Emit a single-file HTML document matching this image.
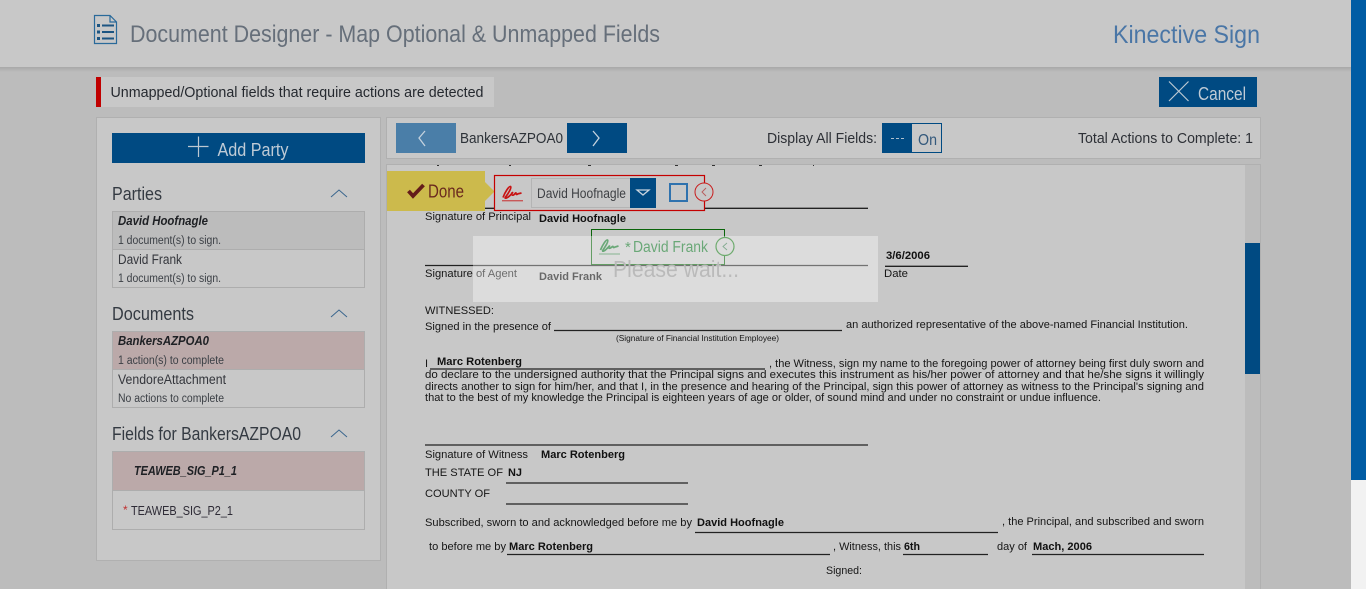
<!DOCTYPE html>
<html><head><meta charset="utf-8"><style>
html,body{margin:0;padding:0;width:1366px;height:589px;overflow:hidden;background:#bcbcbc}
svg{display:block;position:absolute;left:0;top:0}
text{font-family:"Liberation Sans",sans-serif;white-space:pre}
.d{font-size:11px;fill:#161616}
.b{font-size:11px;fill:#111;font-weight:bold}
</style></head><body>
<svg width="1366" height="589" viewBox="0 0 1366 589" xmlns="http://www.w3.org/2000/svg">
<defs>
<linearGradient id="sh" x1="0" y1="0" x2="0" y2="1"><stop offset="0" stop-color="#a8a8a8"/><stop offset="1" stop-color="#bcbcbc"/></linearGradient>
</defs>
<rect width="1366" height="589" fill="#bcbcbc"/>
<rect x="0" y="67" width="1351" height="5" fill="url(#sh)"/>
<rect width="1351" height="67" fill="#c8c8c8"/>
<rect x="1351" width="15" height="480" fill="#005ca4"/>
<rect x="1351" y="480" width="15" height="109" fill="#f2f2f2"/>

<!-- header -->
<path d="M94.5 15.5H110L116.5 22V43.500H94.500Z M110 15.5V22H116.5" fill="none" stroke="#2a6a9a" stroke-width="1.200"/>
<rect x="97" y="24" width="3" height="3" fill="#1c5582"/><rect x="102" y="24.500" width="12" height="2" fill="#1c5582"/>
<rect x="97" y="30.500" width="3" height="3" fill="#1c5582"/><rect x="102" y="31" width="12" height="2" fill="#1c5582"/>
<rect x="97" y="37" width="3" height="3" fill="#1c5582"/><rect x="102" y="37.500" width="12" height="2" fill="#1c5582"/>
<text x="130" y="42" font-size="24" fill="#666f7a" textLength="530" lengthAdjust="spacingAndGlyphs">Document Designer - Map Optional &amp; Unmapped Fields</text>
<text x="1113" y="43" font-size="25" fill="#4a76a6" textLength="147" lengthAdjust="spacingAndGlyphs">Kinective Sign</text>

<!-- alert -->
<rect x="96" y="77" width="398" height="30" fill="#c8c8c8"/>
<rect x="96" y="77" width="5" height="30" fill="#c00000"/>
<text x="110.500" y="97" font-size="15" fill="#25292f" textLength="373" lengthAdjust="spacingAndGlyphs">Unmapped/Optional fields that require actions are detected</text>

<!-- cancel -->
<rect x="1159" y="77" width="98" height="30" fill="#004a82"/>
<path d="M1169 81.500L1188.500 101M1188.500 81.500L1169 101" stroke="#bcc8d2" stroke-width="1.200" fill="none"/>
<text x="1198" y="100" font-size="18" fill="#bfcbd6" textLength="48" lengthAdjust="spacingAndGlyphs">Cancel</text>

<!-- left panel -->
<rect x="96.500" y="117.500" width="284" height="443" fill="#c8c8c8" stroke="#b0b0b0"/>
<rect x="112" y="133" width="253" height="30" fill="#004a82"/>
<path d="M188 146.500H208.500M198.500 136.500V157" stroke="#bcc8d2" stroke-width="1.200" fill="none"/>
<text x="217.500" y="156" font-size="18" fill="#bfcbd6" textLength="71" lengthAdjust="spacingAndGlyphs">Add Party</text>

<text x="112" y="200" font-size="18" fill="#343a42" textLength="50" lengthAdjust="spacingAndGlyphs">Parties</text>
<path d="M331 197L339 190L347 197" fill="none" stroke="#3a668e" stroke-width="1"/>
<rect x="112.500" y="211.500" width="252" height="76" fill="#c8c8c8" stroke="#adadad"/>
<rect x="113" y="212" width="251" height="37" fill="#bcbcbc"/>
<rect x="113" y="249" width="251" height="1" fill="#adadad"/>
<text x="118" y="225" font-size="12.500" font-weight="bold" font-style="italic" fill="#1e2024" textLength="90" lengthAdjust="spacingAndGlyphs">David Hoofnagle</text>
<text x="118" y="244" font-size="11.500" fill="#3c4046" textLength="103" lengthAdjust="spacingAndGlyphs">1 document(s) to sign.</text>
<text x="118" y="264" font-size="13.500" fill="#34363c" textLength="64" lengthAdjust="spacingAndGlyphs">David Frank</text>
<text x="118" y="282" font-size="11.500" fill="#3c4046" textLength="103" lengthAdjust="spacingAndGlyphs">1 document(s) to sign.</text>

<text x="112" y="320" font-size="18" fill="#343a42" textLength="82" lengthAdjust="spacingAndGlyphs">Documents</text>
<path d="M331 317L339 310L347 317" fill="none" stroke="#3a668e" stroke-width="1"/>
<rect x="112.500" y="331.500" width="252" height="76" fill="#c8c8c8" stroke="#adadad"/>
<rect x="113" y="332" width="251" height="37" fill="#bba9a9"/>
<rect x="113" y="369" width="251" height="1" fill="#adadad"/>
<text x="118" y="345" font-size="12.500" font-weight="bold" font-style="italic" fill="#1e2024" textLength="91" lengthAdjust="spacingAndGlyphs">BankersAZPOA0</text>
<text x="118" y="364" font-size="11.500" fill="#3c4046" textLength="106" lengthAdjust="spacingAndGlyphs">1 action(s) to complete</text>
<text x="118" y="384" font-size="13.500" fill="#34363c" textLength="108" lengthAdjust="spacingAndGlyphs">VendoreAttachment</text>
<text x="118" y="402" font-size="11.500" fill="#3c4046" textLength="106" lengthAdjust="spacingAndGlyphs">No actions to complete</text>

<text x="112" y="440" font-size="18" fill="#343a42" textLength="189" lengthAdjust="spacingAndGlyphs">Fields for BankersAZPOA0</text>
<path d="M331 437L339 430L347 437" fill="none" stroke="#3a668e" stroke-width="1"/>
<rect x="112.500" y="451.500" width="252" height="78" fill="#c8c8c8" stroke="#adadad"/>
<rect x="113" y="452" width="251" height="38" fill="#bba9a9"/>
<rect x="113" y="490" width="251" height="1" fill="#adadad"/>
<text x="134" y="475" font-size="12.500" font-weight="bold" font-style="italic" fill="#1e2024" textLength="103" lengthAdjust="spacingAndGlyphs">TEAWEB_SIG_P1_1</text>
<text x="123" y="514" font-size="12" fill="#c03030">*</text>
<text x="131" y="515" font-size="12.500" fill="#2e2b36" textLength="102" lengthAdjust="spacingAndGlyphs">TEAWEB_SIG_P2_1</text>

<!-- toolbar -->
<rect x="386.500" y="117.500" width="874" height="41" fill="#c8c8c8" stroke="#b0b0b0"/>
<rect x="396" y="123" width="60" height="30" fill="#4a7ea8"/>
<path d="M425 131L419 138L425 146" fill="none" stroke="#c4d2de" stroke-width="1.300"/>
<text x="460" y="143" font-size="14.500" fill="#2d3238" textLength="103" lengthAdjust="spacingAndGlyphs">BankersAZPOA0</text>
<rect x="567" y="123" width="60" height="30" fill="#004a82"/>
<path d="M593 131L599 138L593 146" fill="none" stroke="#c4d2de" stroke-width="1.300"/>
<text x="767" y="143" font-size="15" fill="#2d3036" textLength="110" lengthAdjust="spacingAndGlyphs">Display All Fields:</text>
<rect x="882.500" y="123.500" width="59" height="29" fill="#c8c8c8" stroke="#004a82"/>
<rect x="882" y="123" width="30" height="30" fill="#004a82"/>
<rect x="891" y="138" width="3" height="1" fill="#aebfce"/><rect x="896" y="138" width="3" height="1" fill="#aebfce"/><rect x="901" y="138" width="3" height="1" fill="#aebfce"/>
<text x="918" y="145" font-size="15.500" fill="#34597c" textLength="19" lengthAdjust="spacingAndGlyphs">On</text>
<text x="1078" y="143" font-size="15" fill="#2d3036" textLength="175" lengthAdjust="spacingAndGlyphs">Total Actions to Complete: 1</text>

<!-- doc panel -->
<rect x="386.500" y="164.500" width="874" height="430" fill="#c8c8c8" stroke="#b0b0b0"/>
<rect x="1245" y="165" width="15" height="424" fill="#bcbcbc"/>
<rect x="1245" y="243" width="15" height="131" fill="#004a82"/>
<g fill="#333"><rect x="437" y="165" width="2" height="1"/><rect x="509" y="165" width="2" height="1"/><rect x="588" y="165" width="3" height="1"/><rect x="675" y="165" width="3" height="1"/><rect x="712" y="165" width="3" height="1"/><rect x="759" y="165" width="3" height="1"/><rect x="813" y="165" width="1" height="1"/></g>

<g stroke="#222" stroke-width="1.300" fill="none">
<path d="M425 208.300H868M425 265.500H868M885 266.300H968M554 330.500H842M430 369H765M425 445H868M506 483H688M506 504H688M695 532.500H998M507 554.500H830M903 554.500H988M1032 554.500H1204"/>
</g>
<text class="d" x="425" y="220" textLength="106" lengthAdjust="spacingAndGlyphs">Signature of Principal</text>
<text class="b" x="539" y="222" textLength="87" lengthAdjust="spacingAndGlyphs">David Hoofnagle</text>
<text class="d" x="425" y="277" textLength="92" lengthAdjust="spacingAndGlyphs">Signature of Agent</text>
<text class="b" x="539" y="280" textLength="63" lengthAdjust="spacingAndGlyphs">David Frank</text>
<text class="b" x="886" y="259" textLength="44" lengthAdjust="spacingAndGlyphs">3/6/2006</text>
<text class="d" x="884" y="277" textLength="24" lengthAdjust="spacingAndGlyphs">Date</text>
<text class="d" x="425" y="314" textLength="69" lengthAdjust="spacingAndGlyphs">WITNESSED:</text>
<text class="d" x="425" y="330" textLength="126" lengthAdjust="spacingAndGlyphs">Signed in the presence of</text>
<text class="d" x="846" y="328" textLength="342" lengthAdjust="spacingAndGlyphs">an authorized representative of the above-named Financial Institution.</text>
<text x="616" y="341" font-size="8" fill="#161616" textLength="163" lengthAdjust="spacingAndGlyphs">(Signature of Financial Institution Employee)</text>
<text class="d" x="425" y="367">I</text>
<text class="b" x="437" y="365" textLength="85" lengthAdjust="spacingAndGlyphs">Marc Rotenberg</text>
<text class="d" x="769" y="367" textLength="435" lengthAdjust="spacingAndGlyphs">, the Witness, sign my name to the foregoing power of attorney being first duly sworn and</text>
<text class="d" x="425" y="378" textLength="779" lengthAdjust="spacingAndGlyphs">do declare to the undersigned authority that the Principal signs and executes this instrument as his/her power of attorney and that he/she signs it willingly</text>
<text class="d" x="425" y="390" textLength="779" lengthAdjust="spacingAndGlyphs">directs another to sign for him/her, and that I, in the presence and hearing of the Principal, sign this power of attorney as witness to the Principal's signing and</text>
<text class="d" x="425" y="401" textLength="676" lengthAdjust="spacingAndGlyphs">that to the best of my knowledge the Principal is eighteen years of age or older, of sound mind and under no constraint or undue influence.</text>
<text class="d" x="425" y="458" textLength="103" lengthAdjust="spacingAndGlyphs">Signature of Witness</text>
<text class="b" x="541" y="458" textLength="84" lengthAdjust="spacingAndGlyphs">Marc Rotenberg</text>
<text class="d" x="425" y="476" textLength="78" lengthAdjust="spacingAndGlyphs">THE STATE OF</text>
<text class="b" x="508" y="476" textLength="14" lengthAdjust="spacingAndGlyphs">NJ</text>
<text class="d" x="425" y="497" textLength="65" lengthAdjust="spacingAndGlyphs">COUNTY OF</text>
<text class="d" x="425" y="526" textLength="267" lengthAdjust="spacingAndGlyphs">Subscribed, sworn to and acknowledged before me by</text>
<text class="b" x="697" y="526" textLength="87" lengthAdjust="spacingAndGlyphs">David Hoofnagle</text>
<text class="d" x="1002" y="525" textLength="202" lengthAdjust="spacingAndGlyphs">, the Principal, and subscribed and sworn</text>
<text class="d" x="429" y="550" textLength="77" lengthAdjust="spacingAndGlyphs">to before me by</text>
<text class="b" x="509" y="550" textLength="84" lengthAdjust="spacingAndGlyphs">Marc Rotenberg</text>
<text class="d" x="833" y="550" textLength="68" lengthAdjust="spacingAndGlyphs">, Witness, this</text>
<text class="b" x="904" y="550" textLength="16" lengthAdjust="spacingAndGlyphs">6th</text>
<text class="d" x="997" y="550" textLength="30" lengthAdjust="spacingAndGlyphs">day of</text>
<text class="b" x="1033" y="550" textLength="59" lengthAdjust="spacingAndGlyphs">Mach, 2006</text>
<text class="d" x="826" y="574" textLength="36" lengthAdjust="spacingAndGlyphs">Signed:</text>

<!-- done tag -->
<path d="M387 171H485V182L494.500 191.500L485 201V211H387Z" fill="#ccba4c"/>
<path d="M408.500 191L413 196L423.500 185" fill="none" stroke="#641c1a" stroke-width="3.800"/>
<text x="428" y="197.500" font-size="18" fill="#6b2a1e" textLength="36" lengthAdjust="spacingAndGlyphs">Done</text>

<!-- red field -->
<rect x="494.500" y="175.500" width="210" height="35" fill="#c8c8c8" stroke="#c40000" stroke-width="1.200"/>
<g fill="none" stroke="#c81414">
<path d="M503 197.500C505 192 509 186 510.500 186.500C512 187.500 508 194 505.500 197C504 199 507 198.500 510 195.500C511.500 194 513 192.500 512.500 192.500C511 193 511.500 196 513.500 195C515 194 515.500 192.500 516 193C516 194.500 516.500 195 518 193.800L521.500 193" stroke-width="1.700"/>
<path d="M502 200.800H523" stroke-width="0.800"/>
</g>
<rect x="531.500" y="178.500" width="124" height="29" fill="#c8c8c8" stroke="#b4b4b4"/>
<text x="537" y="198" font-size="13.500" fill="#3e4044" textLength="89" lengthAdjust="spacingAndGlyphs">David Hoofnagle</text>
<rect x="630" y="178" width="26" height="30" fill="#004a82"/>
<path d="M637 190H649L643 195Z" fill="none" stroke="#c8d4de" stroke-width="1.300"/>
<rect x="670" y="184" width="17" height="17" fill="none" stroke="#2f72ae" stroke-width="2"/>
<circle cx="704" cy="192" r="9" fill="#c8c8c8" stroke="#c81e1e" stroke-width="1"/>
<path d="M706 188L702 192L706 196" fill="none" stroke="#b85a5a" stroke-width="0.900"/>

<!-- green field -->
<rect x="591.500" y="229.500" width="133" height="35" fill="none" stroke="#0a640a"/>
<g fill="none" stroke="#137529">
<path d="M600.500 250C602.500 245 606 239.500 607.500 240C609 241 605 247 603 250C601.500 252 604.500 251.500 607 248.500C608.500 247 610 246 609.500 246C608 246.500 608.500 249 610.500 248C612 247 612.500 246 613 246.500C613 247.500 613.500 248 615 247L618.500 246" stroke-width="1.700"/>
<path d="M599 254H620" stroke-width="0.800"/>
</g>
<text x="625" y="252" font-size="15" fill="#137529">*</text>
<text x="633" y="252" font-size="15.500" fill="#137529" textLength="75" lengthAdjust="spacingAndGlyphs">David Frank</text>
<circle cx="725" cy="246.500" r="9" fill="#c8c8c8" stroke="#1a7a1a" stroke-width="1.200"/>
<path d="M727 243L723 246.500L727 250" fill="none" stroke="#3c7a50" stroke-width="0.900"/>

<!-- please wait -->
<rect x="473" y="236" width="405" height="66" fill="#fff" fill-opacity="0.370"/>
<text x="613" y="277" font-size="23" fill="#bababa" textLength="126" lengthAdjust="spacingAndGlyphs">Please wait...</text>
</svg>
</body></html>
